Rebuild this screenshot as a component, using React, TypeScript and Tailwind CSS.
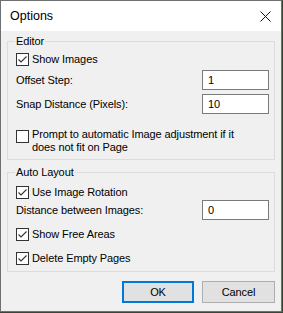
import React from 'react';

function CheckBox({ checked }: { checked: boolean }) {
  return (
    <span className="flex h-[13px] w-[13px] shrink-0 items-center justify-center border border-[#333333] bg-white">
      {checked && (
        <svg width="11" height="11" viewBox="0 0 11 11" className="block">
          <path d="M1.5 5.5 L4 8 L9.5 2.5" fill="none" stroke="#333333" strokeWidth="1.1" />
        </svg>
      )}
    </span>
  );
}

function CheckRow({ label, checked }: { label: string; checked: boolean }) {
  return (
    <label className="flex h-[16px] items-center gap-[3px]">
      <CheckBox checked={checked} />
      <span>{label}</span>
    </label>
  );
}

function NumberRow({ label, value }: { label: string; value: string }) {
  return (
    <div className="flex h-[20px] items-center justify-between pr-[5px]">
      <span>{label}</span>
      <div className="flex h-[20px] w-[67px] items-center border border-[#7a7a7a] bg-white pl-[5px]">
        {value}
      </div>
    </div>
  );
}

function GroupBox({ title, children }: { title: string; children: React.ReactNode }) {
  return (
    <div className="relative border border-[#dcdcdc]">
      <span className="absolute left-[7px] top-[-8px] bg-[#f0f0f0] px-px leading-[15px]">{title}</span>
      {children}
    </div>
  );
}

export default function App() {
  return (
    <div
      className="h-[313px] w-[283px] bg-[#3b4438] text-[11px] tracking-[-0.1px] text-black"
      style={{ fontFamily: '"Liberation Sans", Arial, sans-serif' }}
    >
      <div className="flex h-[312px] w-[282px] flex-col border border-[#6f6f6f] bg-[#f0f0f0]">
        {/* title bar */}
        <div className="flex h-[30px] items-center justify-between bg-white pl-[9px] pr-[9px]">
          <span className="text-[12.5px] tracking-normal">Options</span>
          <svg width="11" height="11" viewBox="0 0 11 11" className="mr-[1px]">
            <path d="M0.5 0.5 L10.5 10.5 M10.5 0.5 L0.5 10.5" stroke="#111" strokeWidth="1" />
          </svg>
        </div>

        <div className="flex flex-col px-[6px] pt-[10px]">
          <GroupBox title="Editor">
            <div className="flex flex-col pb-[5px] pl-[8px] pt-[9px]">
              <CheckRow label="Show Images" checked />
              <div className="mt-[3px] flex flex-col gap-[4px]">
                <NumberRow label="Offset Step:" value="1" />
                <NumberRow label="Snap Distance (Pixels):" value="10" />
              </div>
              <div className="mt-[14px] flex items-start gap-[3px]">
                <span className="mt-[2px]">
                  <CheckBox checked={false} />
                </span>
                <span className="leading-[13px]">
                  Prompt to automatic Image adjustment if it
                  <br />
                  does not fit on Page
                </span>
              </div>
            </div>
          </GroupBox>

          <div className="mt-[12px]">
            <GroupBox title="Auto Layout">
              <div className="flex flex-col pb-[5px] pl-[8px] pt-[11px]">
                <CheckRow label="Use Image Rotation" checked />
                <NumberRow label="Distance between Images:" value="0" />
                <div className="mt-[6px] flex flex-col gap-[8px]">
                  <CheckRow label="Show Free Areas" checked />
                  <CheckRow label="Delete Empty Pages" checked />
                </div>
              </div>
            </GroupBox>
          </div>

          <div className="mt-[9px] flex justify-end gap-[8px]">
            <button className="h-[22px] w-[72px] border-2 border-[#0078d7] bg-[#e1e1e1]">OK</button>
            <button className="h-[22px] w-[73px] border border-[#adadad] bg-[#e1e1e1]">Cancel</button>
          </div>
        </div>
      </div>
    </div>
  );
}
